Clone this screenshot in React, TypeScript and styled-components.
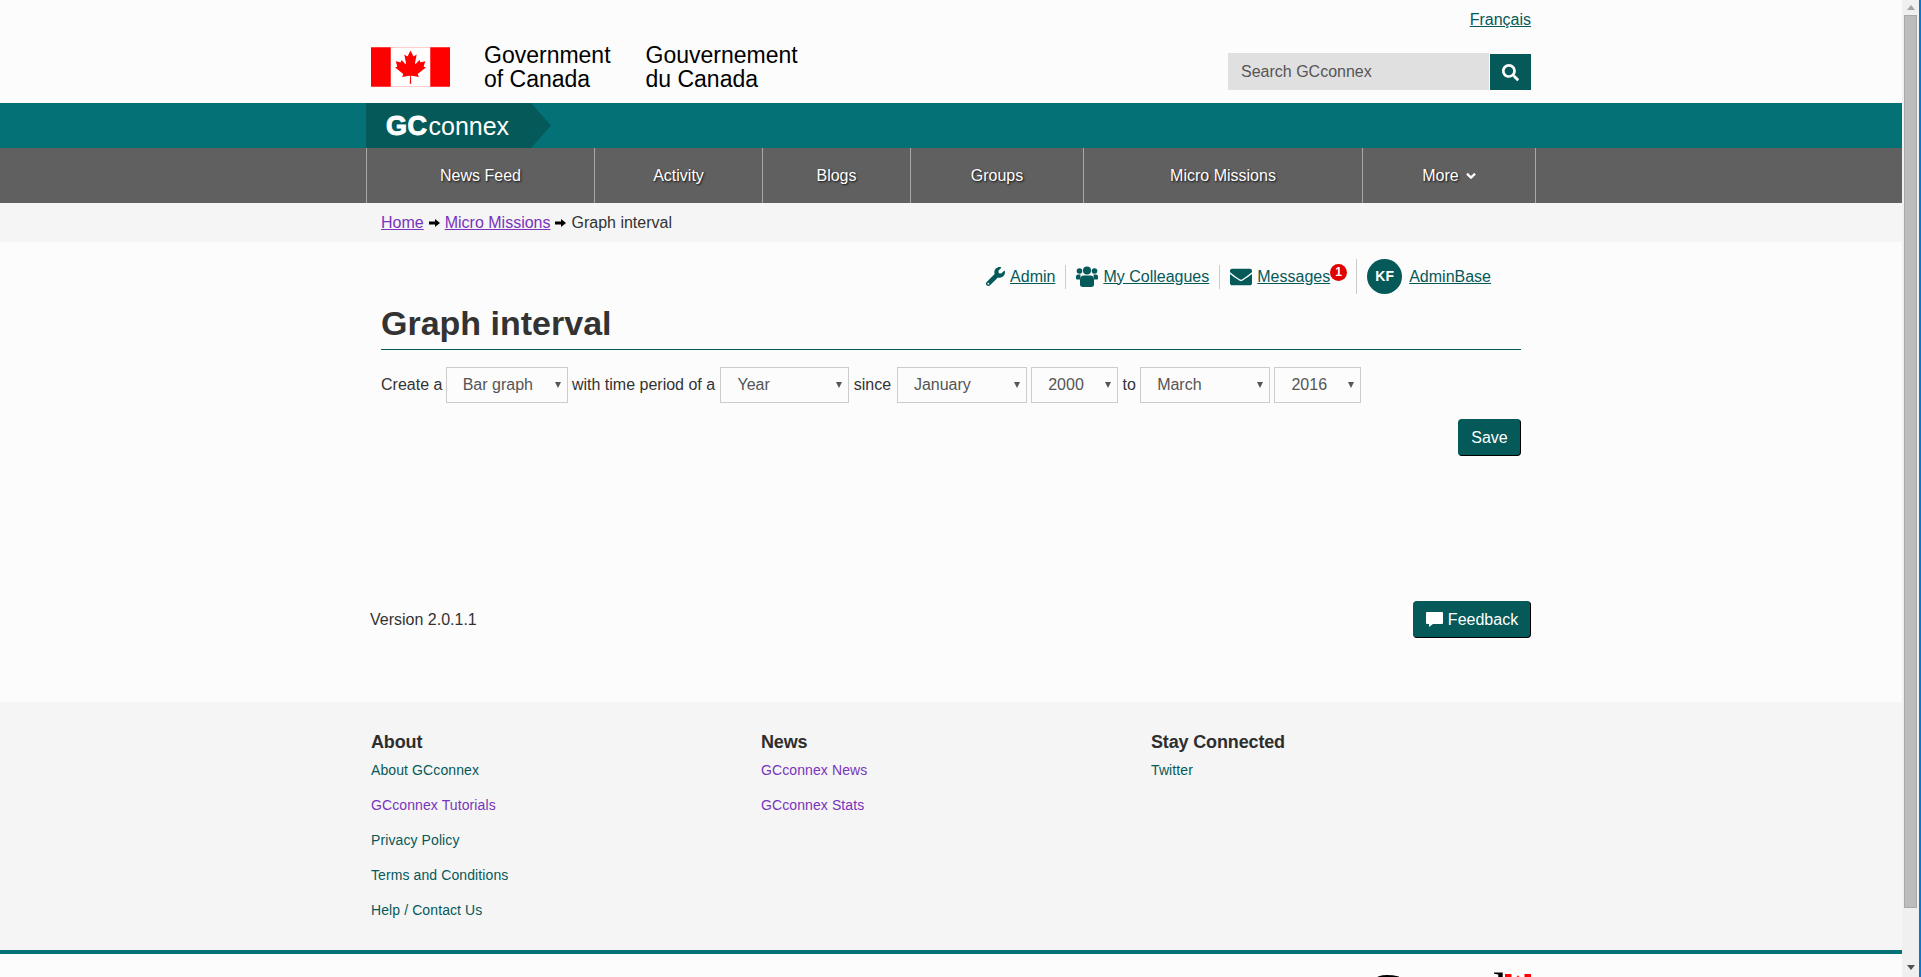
import React from "react";
import styled, { createGlobalStyle } from "styled-components";
import { FaChevronDown, FaEnvelope, FaSearch, FaWrench } from "react-icons/fa";

const GlobalStyle = createGlobalStyle`
  html, body {
    margin: 0;
    height: 100%;
    overflow: hidden;
    background: #fcfcfc;
    color: #333;
    font-family: "Liberation Sans", Arial, sans-serif;
    font-size: 16px;
  }
`;

const Root = styled.div`
  display: flex;
  height: 100vh;
  overflow: hidden;
`;

const Page = styled.div`
  flex: 1;
  min-width: 0;
  overflow: hidden;
  background: #fcfcfc;
`;

const Container = styled.div`
  width: 1170px;
  margin: 0 auto;
`;

const Scrollbar = styled.div`
  flex: none;
  width: 17px;
  border-right: 2px solid #0078d7;
  background: #f0f0f0;
  display: flex;
  flex-direction: column;
  align-items: center;
`;

const ScrollArrow = styled.div<{ $down?: boolean }>`
  flex: none;
  height: 15px;
  display: flex;
  align-items: center;
  justify-content: center;
  margin-top: ${(p) => (p.$down ? "auto" : "0")};
  margin-bottom: ${(p) => (p.$down ? "2px" : "0")};

  &::before {
    content: "";
    border-left: 4px solid transparent;
    border-right: 4px solid transparent;
    border-bottom: ${(p) => (p.$down ? "0" : "5px solid #a3a3a3")};
    border-top: ${(p) => (p.$down ? "5px solid #505050" : "0")};
  }
`;

const ScrollThumb = styled.div`
  flex: none;
  width: 13px;
  height: 893px;
  box-sizing: border-box;
  background: #bcbcbc;
  border: 1px solid #a9a9a9;
`;

const Header = styled.header`
  height: 103px;
  padding: 0 5px;
  box-sizing: border-box;
`;

const LangRow = styled.div`
  display: flex;
  justify-content: flex-end;
  height: 30px;
  padding-top: 11px;
  box-sizing: border-box;
  line-height: 18px;
`;

const Link = styled.a<{ $visited?: boolean }>`
  color: ${(p) => (p.$visited ? "#7834bc" : "#055959")};
  text-decoration: underline;
  cursor: pointer;
`;

const BrandRow = styled.div`
  display: flex;
  justify-content: space-between;
  align-items: flex-start;
`;

const Brand = styled.div`
  display: flex;
  align-items: flex-start;
  margin-top: 14px;
`;

const FlagSvg = styled.svg`
  display: block;
  width: 79px;
  height: 40px;
  margin: 3px 34px 0 0;
`;

const Signature = styled.div`
  width: 161.5px;
  font-size: 23px;
  line-height: 23.5px;
  color: #000;
`;

const SearchForm = styled.form`
  display: flex;
  align-items: flex-end;
  margin: 23px 0 0;
`;

const SearchInput = styled.input`
  width: 261px;
  height: 37px;
  box-sizing: border-box;
  border: 0;
  padding: 0 13px;
  background: #e0e0e0;
  font: inherit;
  color: #333;

  &::placeholder {
    color: #555;
    opacity: 1;
  }
`;

const SearchButton = styled.button`
  width: 41px;
  height: 36px;
  margin-left: 1px;
  padding: 0;
  border: 0;
  background: #055959;
  color: #fff;
  display: flex;
  align-items: center;
  justify-content: center;
`;

const AppBar = styled.div`
  height: 45px;
  background: #047177;
`;

const AppLogo = styled.div`
  width: 185px;
  height: 45px;
  box-sizing: border-box;
  padding: 2px 0 0 20px;
  background: #055959;
  clip-path: polygon(0 0, 165px 0, 100% 50%, 165px 100%, 0 100%);
  display: flex;
  align-items: center;
  color: #fff;
  font-size: 25px;
  line-height: 43px;
`;

const AppLogoStrong = styled.span`
  font-weight: 700;
  font-size: 27px;
  letter-spacing: 0.5px;
  -webkit-text-stroke: 1px #fff;
  margin-right: 1px;
`;

const NavBar = styled.nav`
  height: 55px;
  background: #606060;
`;

const NavList = styled.div`
  display: flex;
  height: 55px;
  width: fit-content;
  border-left: 1px solid #a8a8a8;
`;

const NavItem = styled.a<{ $width: number }>`
  width: ${(p) => p.$width}px;
  box-sizing: border-box;
  border-right: 1px solid #a8a8a8;
  display: flex;
  align-items: center;
  justify-content: center;
  gap: 7px;
  color: #fff;
  text-shadow: 1px 1px 2px #111;
  cursor: pointer;
`;

const Breadcrumb = styled.div`
  height: 39px;
  background: #f5f5f5;
`;

const CrumbList = styled.div`
  display: flex;
  align-items: center;
  gap: 5px;
  height: 39px;
  padding-left: 15px;
`;

const CrumbArrow = styled.svg`
  flex: none;
  width: 11px;
  height: 8px;
`;

const Content = styled.main`
  padding: 0 15px;
`;

const Toolbar = styled.div`
  display: flex;
  justify-content: flex-end;
  align-items: center;
  height: 35px;
  padding: 17px 30px 0 0;
  color: #055959;
`;

const ToolLink = styled.div<{ $trailing?: number }>`
  position: relative;
  display: flex;
  align-items: center;
  gap: 5px;
  padding-right: ${(p) => p.$trailing ?? 0}px;
`;

const ToolDivider = styled.span<{ $height: number }>`
  width: 1px;
  height: ${(p) => p.$height}px;
  background: #ccc;
  margin: 0 10px;
`;

const Badge = styled.span`
  position: absolute;
  top: -2px;
  right: -1px;
  width: 17px;
  height: 17px;
  border-radius: 50%;
  background: #e00000;
  color: #fff;
  font-size: 12px;
  font-weight: 700;
  line-height: 17px;
  text-align: center;
`;

const Avatar = styled.span`
  width: 35px;
  height: 35px;
  border-radius: 50%;
  background: #055959;
  color: #fff;
  font-size: 14px;
  font-weight: 700;
  line-height: 35px;
  text-align: center;
  margin-right: 2px;
`;

const Title = styled.h1`
  margin: 9px 0 17px;
  padding-bottom: 6px;
  border-bottom: 1px solid #055959;
  font-size: 34px;
  line-height: 40px;
  font-weight: 700;
  color: #333;
`;

const FormRow = styled.form`
  display: flex;
  align-items: center;
  gap: 4.3px;
  height: 36px;
`;

const FormLabel = styled.span<{ $after?: number }>`
  margin-right: ${(p) => p.$after ?? 0}px;
`;

const SelectWrap = styled.span<{ $width: number }>`
  position: relative;
  flex: none;
  width: ${(p) => p.$width}px;
  height: 36px;

  &::after {
    content: "";
    position: absolute;
    top: 15px;
    right: 7px;
    border-left: 3.5px solid transparent;
    border-right: 3.5px solid transparent;
    border-top: 6px solid #555;
    pointer-events: none;
  }
`;

const Select = styled.select`
  appearance: none;
  width: 100%;
  height: 100%;
  box-sizing: border-box;
  border: 1px solid #ccc;
  border-radius: 0;
  background: #fcfcfc;
  padding: 0 16px 2px;
  font: inherit;
  color: #555;
`;

const SaveRow = styled.div`
  display: flex;
  justify-content: flex-end;
  margin-top: 16px;
`;

const PrimaryButton = styled.button<{ $width: number }>`
  width: ${(p) => p.$width}px;
  height: 37px;
  box-sizing: border-box;
  padding: 0;
  display: flex;
  align-items: center;
  justify-content: center;
  gap: 5px;
  background: #055959;
  color: #fff;
  border: 1px solid #055959;
  border-right-color: #000;
  border-bottom-color: #000;
  border-radius: 4px;
  font: inherit;
`;

const VersionRow = styled.div`
  display: flex;
  justify-content: space-between;
  align-items: center;
  margin-top: 145px;
  padding: 0 5px 0 4px;
  height: 37px;
`;

const Footer = styled.footer`
  height: 248px;
  box-sizing: border-box;
  margin-top: 64px;
  padding-top: 30px;
  background: #f5f5f5;
`;

const FooterColumns = styled.div`
  display: grid;
  grid-template-columns: repeat(3, 390px);
  padding-left: 5px;
`;

const FooterHeading = styled.h3`
  margin: 0 0 1px;
  font-size: 18px;
  line-height: 20px;
  font-weight: 700;
  letter-spacing: -0.15px;
  color: #2e2e2e;
`;

const FooterLink = styled.a<{ $visited?: boolean }>`
  display: block;
  height: 35px;
  line-height: 35px;
  font-size: 14px;
  letter-spacing: 0.1px;
  color: ${(p) => (p.$visited ? "#7834bc" : "#055959")};
  cursor: pointer;
`;

const FooterRule = styled.div`
  height: 4px;
  background: #047177;
`;

const WordmarkRow = styled.div`
  display: flex;
  justify-content: flex-end;
  padding: 11px 5px 0 0;
`;

const Wordmark = styled.div`
  position: relative;
  font-family: "Liberation Serif", "Times New Roman", serif;
  font-size: 55px;
  line-height: 55px;
  color: #000;
`;

const WordmarkFlag = styled.svg`
  position: absolute;
  top: 9px;
  right: 0;
  width: 26px;
  height: 13px;
`;

const Leaf = () => (
  <>
    <rect width="9600" height="4800" fill="#f00" />
    <path
      fill="#fff"
      d="m2400 0h4800v4800h-4800zm2490 4430-45-863a95 95 0 0 1 111-98l859 151-116-320a65 65 0 0 1 20-73l941-762-212-99a65 65 0 0 1-34-79l186-572-542 115a65 65 0 0 1-73-38l-105-247-423 454a65 65 0 0 1-111-57l204-1052-327 189a65 65 0 0 1-91-27l-332-652-332 652a65 65 0 0 1-91 27l-327-189 204 1052a65 65 0 0 1-111 57l-423-454-105 247a65 65 0 0 1-73 38l-542-115 186 572a65 65 0 0 1-34 79l-212 99 941 762a65 65 0 0 1 20 73l-116 320 859-151a95 95 0 0 1 111 98l-45 863z"
    />
  </>
);

const Arrow = () => (
  <CrumbArrow viewBox="0 0 11 8">
    <path d="M0 2.5h6V0l5 4-5 4V5.500H0z" fill="#000" />
  </CrumbArrow>
);

// three heads and a wide body, the old font-awesome "group" shape
const GroupIcon = () => (
  <svg width="22" height="21" viewBox="0 0 22 21" fill="currentColor">
    <circle cx="11" cy="4.500" r="4" />
    <circle cx="3.500" cy="5" r="2.800" />
    <circle cx="18.500" cy="5" r="2.800" />
    <path d="M0 10.500Q0 8.500 2 8.500h2.500Q4.500 11 4 13.500H1Q0 13.500 0 12.500zM22 10.500Q22 8.500 20 8.500h-2.500Q17.500 11 18 13.500h3Q22 13.500 22 12.500z" />
    <path d="M8 9.500h6q4 0 4 4v5q0 2.500-3 2.500H7q-3 0-3-2.500v-5q0-4 4-4z" />
  </svg>
);

const navItems = [
  { label: "News Feed", width: 228 },
  { label: "Activity", width: 168 },
  { label: "Blogs", width: 148 },
  { label: "Groups", width: 173 },
  { label: "Micro Missions", width: 279 },
];

const footerColumns = [
  {
    title: "About",
    links: [
      { label: "About GCconnex" },
      { label: "GCconnex Tutorials", visited: true },
      { label: "Privacy Policy" },
      { label: "Terms and Conditions" },
      { label: "Help / Contact Us" },
    ],
  },
  {
    title: "News",
    links: [
      { label: "GCconnex News", visited: true },
      { label: "GCconnex Stats", visited: true },
    ],
  },
  { title: "Stay Connected", links: [{ label: "Twitter" }] },
];

const months = ["January", "February", "March"];

const App: React.FC = () => {
  return (
    <Root>
      <GlobalStyle />
      <Page>
        <Container>
          <Header>
            <LangRow>
              <Link>Français</Link>
            </LangRow>
            <BrandRow>
              <Brand>
                <FlagSvg viewBox="0 0 9600 4800">
                  <Leaf />
                </FlagSvg>
                <Signature>
                  Government
                  <br />
                  of Canada
                </Signature>
                <Signature>
                  Gouvernement
                  <br />
                  du Canada
                </Signature>
              </Brand>
              <SearchForm>
                <SearchInput placeholder="Search GCconnex" />
                <SearchButton type="button" aria-label="Search">
                  <FaSearch size={17} />
                </SearchButton>
              </SearchForm>
            </BrandRow>
          </Header>
        </Container>

        <AppBar>
          <Container>
            <AppLogo>
              <AppLogoStrong>GC</AppLogoStrong>connex
            </AppLogo>
          </Container>
        </AppBar>

        <NavBar>
          <Container>
            <NavList>
              {navItems.map((item) => (
                <NavItem key={item.label} $width={item.width}>
                  {item.label}
                </NavItem>
              ))}
              <NavItem $width={173}>
                More{" "}
                <FaChevronDown size={10} stroke="currentColor" strokeWidth={50} />
              </NavItem>
            </NavList>
          </Container>
        </NavBar>

        <Breadcrumb>
          <Container>
            <CrumbList>
              <Link $visited>Home</Link>
              <Arrow />
              <Link $visited>Micro Missions</Link>
              <Arrow />
              <span>Graph interval</span>
            </CrumbList>
          </Container>
        </Breadcrumb>

        <Container>
          <Content>
            <Toolbar>
              <ToolLink>
                <FaWrench size={19} />
                <Link>Admin</Link>
              </ToolLink>
              <ToolDivider $height={24} />
              <ToolLink>
                <GroupIcon />
                <Link>My Colleagues</Link>
              </ToolLink>
              <ToolDivider $height={24} />
              <ToolLink $trailing={16}>
                <FaEnvelope size={22} />
                <Link>Messages</Link>
                <Badge>1</Badge>
              </ToolLink>
              <ToolDivider $height={35} />
              <ToolLink>
                <Avatar>KF</Avatar>
                <Link>AdminBase</Link>
              </ToolLink>
            </Toolbar>

            <Title>Graph interval</Title>

            <FormRow>
              <FormLabel $after={-1}>Create a</FormLabel>
              <SelectWrap $width={122}>
                <Select defaultValue="Bar graph">
                  <option>Bar graph</option>
                  <option>Line graph</option>
                </Select>
              </SelectWrap>
              <FormLabel $after={1}>with time period of a</FormLabel>
              <SelectWrap $width={129}>
                <Select defaultValue="Year">
                  <option>Year</option>
                  <option>Month</option>
                </Select>
              </SelectWrap>
              <FormLabel $after={1.5}>since</FormLabel>
              <SelectWrap $width={130}>
                <Select defaultValue="January">
                  {months.map((month) => (
                    <option key={month}>{month}</option>
                  ))}
                </Select>
              </SelectWrap>
              <SelectWrap $width={87}>
                <Select defaultValue="2000">
                  <option>2000</option>
                  <option>2016</option>
                </Select>
              </SelectWrap>
              <FormLabel>to</FormLabel>
              <SelectWrap $width={130}>
                <Select defaultValue="March">
                  {months.map((month) => (
                    <option key={month}>{month}</option>
                  ))}
                </Select>
              </SelectWrap>
              <SelectWrap $width={87}>
                <Select defaultValue="2016">
                  <option>2000</option>
                  <option>2016</option>
                </Select>
              </SelectWrap>
            </FormRow>

            <SaveRow>
              <PrimaryButton type="button" $width={63}>
                Save
              </PrimaryButton>
            </SaveRow>
          </Content>

          <VersionRow>
            <span>Version 2.0.1.1</span>
            <PrimaryButton type="button" $width={118}>
              <svg width="17" height="15" viewBox="0 0 17 15">
                <path
                  d="M1 0h15a1 1 0 0 1 1 1v10a1 1 0 0 1-1 1H7l-4 3v-3H1a1 1 0 0 1-1-1V1a1 1 0 0 1 1-1z"
                  fill="#fff"
                />
              </svg>
              Feedback
            </PrimaryButton>
          </VersionRow>
        </Container>

        <Footer>
          <Container>
            <FooterColumns>
              {footerColumns.map((column) => (
                <div key={column.title}>
                  <FooterHeading>{column.title}</FooterHeading>
                  {column.links.map((link) => (
                    <FooterLink key={link.label} $visited={link.visited}>
                      {link.label}
                    </FooterLink>
                  ))}
                </div>
              ))}
            </FooterColumns>
          </Container>
        </Footer>
        <FooterRule />

        <Container>
          <WordmarkRow>
            <Wordmark>
              Canada
              <WordmarkFlag viewBox="0 0 9600 4800">
                <Leaf />
              </WordmarkFlag>
            </Wordmark>
          </WordmarkRow>
        </Container>
      </Page>
      <Scrollbar>
        <ScrollArrow />
        <ScrollThumb />
        <ScrollArrow $down />
      </Scrollbar>
    </Root>
  );
};

export default App;
